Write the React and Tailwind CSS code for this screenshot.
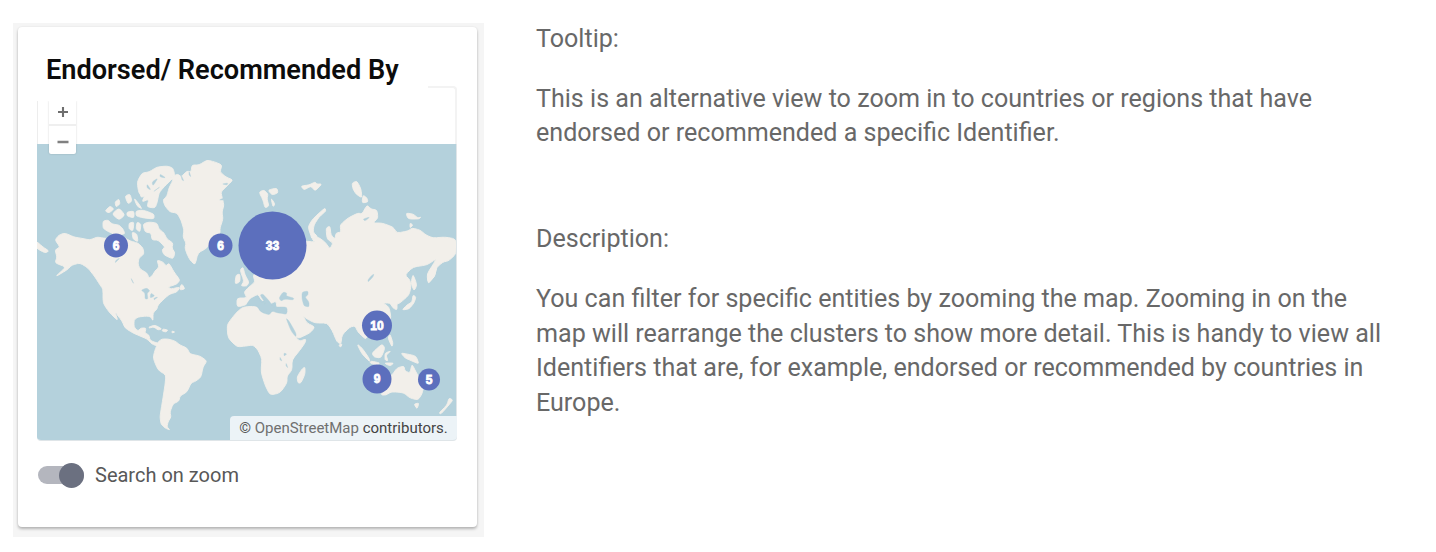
const clusters = [
  { x: 116, y: 245.5, r: 12, label: "6" },
  { x: 220.5, y: 245.5, r: 12, label: "6" },
  { x: 272.5, y: 245.5, r: 34, label: "33" },
  { x: 377, y: 325.5, r: 15, label: "10" },
  { x: 377, y: 379, r: 14.5, label: "9" },
  { x: 429, y: 379.5, r: 11, label: "5" },
];

const land = [
  // North America
  "M55 240L59 235L65 233L74 237L80 238L90 240L97 237L103 238L112 239L122 236L130 241L138 243L143 248L144 254L139 258L138 264L140 269L147 273L149 278L152 276L155 271L159 267L157 260L163 262L166 266L169 263L174 272L180 280L177 284L168 287L171 289L180 287L177 292L170 294L165 298L158 305L157 309L153 313L153 321L151 317L147 316L138 317L134 320L134 327L138 331L141 328L146 328L145 333L149 335L150 340L154 342L158 343L157 346L152 344L147 339L140 336L133 333L125 328L122 321L115 312L118 321L109 312L103 303L103 289L100 285L95 277L88 268L80 263L72 265L67 270L55 277L66 267L55 263L57 257L55 250L60 247Z",
  "M36 241L43 247L49 251L45 253L36 248Z",
  // Arctic archipelago
  "M137 182L142 173L149 172L157 167L167 166L173 168L175 176L168 183L163 188L159 193L157 203L155 208L147 207L149 199L142 202L145 195L139 194Z",
  "M103 221L108 220L112 224L119 225L123 229L125 234L116 235L107 231L103 228Z",
  "M105 211L110 206L114 209L109 213Z M115 202L119 199L120 204L116 207Z M112 214L119 208L125 215L119 220Z M125 196L130 194L132 201L128 204Z M134 198L139 204L142 209L137 206Z M127 212L134 211L134 218L127 216Z M136 211L143 210L154 214L154 219L144 218L136 216Z M129 223L134 222L133 231L129 229Z M137 222L141 224L140 232L136 229Z M139 188L148 190L147 194L141 198Z M132 232L137 234L138 242L133 239Z",
  "M143 224L149 222L157 223L159 229L164 233L167 239L173 243L172 248L175 253L173 259L164 255L162 250L165 247L158 240L152 240L151 233L145 232Z",
  "M180 287L182 284L185 289L180 290Z",
  // Greenland
  "M163 200L167 196L169 188L173 180L170 177L178 174L181 177L187 171L191 172L192 165L199 165L207 160L215 162L222 165L220 172L226 177L233 180L228 185L225 188L221 192L222 197L224 205L222 212L223 219L220 228L220 234L212 240L207 248L198 253L195 265L190 260L187 254L185 248L186 243L183 237L184 230L181 220L177 213L170 212L165 206Z",
  // Caribbean
  "M149 327L155 325L162 329L158 330L154 327L149 328Z M163 329L168 330L166 332L162 331Z M172 331L175 332L172 333Z",
  // South America
  "M158 342L162 339L168 339L175 341L180 345L187 348L190 354L200 356L207 361L203 367L201 377L196 381L191 383L187 392L180 396L179 401L173 404L170 412L171 417L168 422L167 427L170 430L165 428L161 424L160 417L161 410L163 398L165 385L166 375L158 370L153 358L155 350L157 345Z",
  // Svalbard and Arctic islands
  "M259 192L264 190L268 194L267 199L269 206L265 208L263 200Z M268 190L277 188L278 193L272 195Z M271 198L275 204L273 207Z M301 186L309 185L315 182L317 184L322 184L315 191L311 186L304 190Z M352 183L357 181L361 189L362 198L356 194L353 189Z M363 195L367 198L368 202L362 203Z M406 213L413 214L418 218L421 217L419 219L408 219Z M410 223L413 225L410 228Z",
  "M311 236L308 227L312 220L318 214L325 208L326 211L319 217L314 225L313 232L318 237L312 239Z",
  // Africa
  "M243 307L257 306L260 312L270 315L273 310L280 313L287 315L288 320L292 329L297 339L300 341L306 339L305 343L300 350L292 360L292 370L287 376L287 383L280 393L270 395L265 385L261 372L262 359L258 350L253 345L246 346L237 347L228 338L227 325L232 318L237 312Z",
  "M302 369L305 367L305 374L301 383L298 383L297 377Z",
  // British Isles
  "M236 275L240 274L240 282L235 284Z M240 270L243 267L245 275L249 282L247 286L241 286L244 281Z",
  // Eurasia
  "M237 298L247 298L244 292L249 287L255 282L253 275L260 270L268 267L280 259L293 244L304 241L315 242L312 239L318 237L325 242L330 249L333 243L327 239L326 228L330 226L331 235L335 239L336 233L341 232L340 225L348 218L358 213L362 214L367 205L371 209L377 210L378 218L373 223L382 223L393 227L397 233L408 231L412 228L420 230L426 235L433 238L445 237L456 239L456 253L453 257L448 261L443 262L436 268L435 276L428 283L427 274L434 263L436 259L427 265L413 267L405 275L410 280L411 287L409 295L400 303L397 304L397 310L393 308L390 303L383 303L389 307L391 317L389 323L377 329L370 331L366 339L363 337L358 332L355 326L350 327L342 335L341 344L337 342L332 330L327 323L315 323L307 319L303 316L307 323L315 327L310 333L297 339L292 328L286 316L288 309L282 307L277 308L276 301L270 304L267 299L262 301L258 294L251 298L246 305L237 307Z",
  "M413 274L417 285L414 291L411 283Z M413 295L416 297L414 303L409 309L402 310L407 305L412 302Z",
  "M428 274L435 263L437 268L434 277L428 284Z",
  "M340 344L342 344L341 347L339 346Z",
  // South-east Asia
  "M357 344L362 348L369 358L370 362L362 354Z M372 353L382 344L385 348L381 358L374 357Z M385 353L391 351L386 355L388 361L385 360Z M371 361L380 363L377 365L370 363Z M390 334L393 343L392 347L388 338Z M384 363L394 363L390 366Z M401 353L407 354L416 356L419 364L412 361L405 358Z",
  // Australia, Tasmania, New Zealand
  "M381 395L384 389L385 380L392 375L397 368L404 366L405 371L410 373L412 364L416 372L420 379L424 385L422 394L418 400L410 398L404 393L397 392L391 392L386 395Z M414 404L419 403L417 409Z M449 398L453 400L448 406L441 414L439 413L447 405Z",
];

const water = [
  // Mediterranean
  "M246 305L251 298L258 297L262 303L266 304L260 295L263 294L270 302L273 307L278 307L287 307L287 314L278 313L272 311L269 315L261 312L257 306Z",
  // Black Sea, Caspian and Red Sea
  "M279 298L283 292L287 293L286 296L294 298L293 300L285 299L281 301Z",
  "M302 292L308 291L308 295L305 297L309 302L309 307L304 306L302 299Z",
  "M286 318L289 321L296 333L296 337L291 331Z",
  // Great Lakes, Baikal and African lakes
  "M141 290L147 288L150 291L147 293L148 299L145 299L145 293Z M151 293L155 296L150 298Z M154 298L158 297L154 300Z",
  "M368 282L373 277L374 274L371 276L368 280Z M284 353L287 354L284 356Z M280 357L282 361L280 360Z M286 363L288 368L286 366Z",
  // Arctic and Canadian waters
  "M110 250L116 248L112 252Z M116 260L120 258L115 263Z M363 219L370 217L365 221Z M131 278L134 284L132 281Z",
  // Ellesmere and Greenland fjords
  "M152 182L158 178L153 186Z M160 174L166 178L160 177Z M147 184L151 190L147 188Z M160 187L153 192L158 188Z",
  "M181 175L184 181L182 180Z M189 171L191 177L189 175Z M228 183L222 184L227 185Z M224 198L219 200L223 200Z",
];

// Softens each outline: corners are cut at a third of every edge and bridged by a curve.
function smooth(d) {
  return d
    .split("Z")
    .filter((part) => part.trim())
    .map((part) => {
      const pts = part
        .trim()
        .slice(1)
        .split("L")
        .map((p) => p.trim().split(" ").map(Number));
      const along = (a, b) => `${a[0] + (b[0] - a[0]) * 0.3} ${a[1] + (b[1] - a[1]) * 0.3}`;
      const steps = pts.map((p, i) => {
        const prev = pts[(i + pts.length - 1) % pts.length];
        const next = pts[(i + 1) % pts.length];
        return `${i === 0 ? "M" : "L"}${along(p, prev)}Q${p[0]} ${p[1]} ${along(p, next)}`;
      });
      return `${steps.join("")}Z`;
    })
    .join("");
}

function WorldMap() {
  return (
    <svg viewBox="37 144 419 296" className="block h-[296px] w-[419px] bg-[#b4d1dc]" role="img">
      <g fill="#f2efea" stroke="#f2efea" strokeWidth="0.9" strokeLinejoin="round">
        {land.map((d) => (
          <path key={d} d={smooth(d)} />
        ))}
      </g>
      <g fill="#b4d1dc" stroke="#b4d1dc" strokeWidth="0.4">
        {water.map((d) => (
          <path key={d} d={smooth(d)} />
        ))}
      </g>
      {clusters.map((c) => (
        <g key={`${c.x}-${c.y}`}>
          <circle cx={c.x} cy={c.y} r={c.r} fill="#5c6fbd" />
          <text
            x={c.x}
            y={c.y + 4}
            textAnchor="middle"
            fill="#fff"
            stroke="#fff"
            strokeWidth="0.8"
            className="font-['Liberation_Sans',sans-serif] text-[12px] font-bold"
          >
            {c.label}
          </text>
        </g>
      ))}
    </svg>
  );
}

function MapPanel() {
  return (
    <div className="relative ml-[19px] h-[354px] w-[420px]">
      <div className="absolute top-0 right-0 h-[58px] w-[29px] rounded-tr-[4px] border-t-2 border-r-2 border-[#f3f3f3]" />
      <div className="absolute top-[15px] left-0 h-[43px] w-px bg-[#ededed]" />
      <div className="h-[58px]" />
      <div className="h-[297px] w-[420px] overflow-hidden rounded-b-[4px] border-r border-b border-[#dfe5e8]">
        <WorldMap />
      </div>
      <div className="absolute top-[15px] left-[12px] flex w-[27px] flex-col overflow-hidden rounded-b-[2px] bg-white shadow-[0_0_2px_rgba(0,0,0,0.2)] [clip-path:inset(0_-3px_-3px_-3px)]">
        <button className="flex h-[25px] items-center justify-center border-b-2 border-[#efefef] pb-[2px]" aria-label="Zoom in">
          <svg viewBox="0 0 12 12" className="size-3" stroke="#6e6e6e" strokeWidth="2.1">
            <path d="M6 1V11M1 6H11" />
          </svg>
        </button>
        <button className="flex h-[28px] items-center justify-center pt-px" aria-label="Zoom out">
          <svg viewBox="0 0 12 12" className="size-3" stroke="#808080" strokeWidth="2.4">
            <path d="M0.5 7H11.5" />
          </svg>
        </button>
      </div>
      <div className="absolute right-0 bottom-0 flex h-[24px] w-[227px] items-center justify-center rounded-tl-[4px] rounded-br-[4px] bg-[#ecf3f7] pt-px text-[15px] whitespace-pre text-[#707070]">
        <span className="text-[#555]">© </span>OpenStreetMap<span className="text-[#444]"> contributors.</span>
      </div>
    </div>
  );
}

function SearchToggle() {
  return (
    <div className="mt-[20px] ml-5 flex h-[30px] items-center">
      <div className="flex h-[18px] w-[46px] items-center justify-end rounded-full bg-[#b4b6be]">
        <div className="size-[25px] shrink-0 rounded-full bg-[#6b7080]" />
      </div>
      <span className="ml-[11px] text-[20px] whitespace-nowrap text-[#585858]">Search on zoom</span>
    </div>
  );
}

export default function App() {
  return (
    <main className="flex h-[552px] w-[1436px] overflow-hidden bg-white pt-[23px] pl-[13px] font-[Roboto,sans-serif]">
      <section className="h-[514px] w-[471px] shrink-0 bg-[#f5f5f5] pt-1 pl-[5px]">
        <div className="h-[500px] w-[459px] rounded-[4px] bg-white shadow-[0_2px_3px_rgba(0,0,0,0.26),0_0_2px_rgba(0,0,0,0.08)]">
          <h2 className="h-[59px] pt-[26px] pl-[28px] text-[27.15px] leading-[34px] font-semibold whitespace-nowrap text-[#0c0c0c]">
            Endorsed/ Recommended By
          </h2>
          <MapPanel />
          <SearchToggle />
        </div>
      </section>
      <section className="ml-[52px] text-[25.08px] leading-[34.7px] whitespace-nowrap text-[#686868]">
        <p className="-mt-px">Tooltip:</p>
        <p className="mt-[25px]">
          This is an alternative view to zoom in to countries or regions that have
          <br />
          endorsed or recommended a specific Identifier.
        </p>
        <p className="mt-[71px]">Description:</p>
        <p className="mt-[25px]">
          You can filter for specific entities by zooming the map. Zooming in on the
          <br />
          map will rearrange the clusters to show more detail. This is handy to view all
          <br />
          Identifiers that are, for example, endorsed or recommended by countries in
          <br />
          Europe.
        </p>
      </section>
    </main>
  );
}
